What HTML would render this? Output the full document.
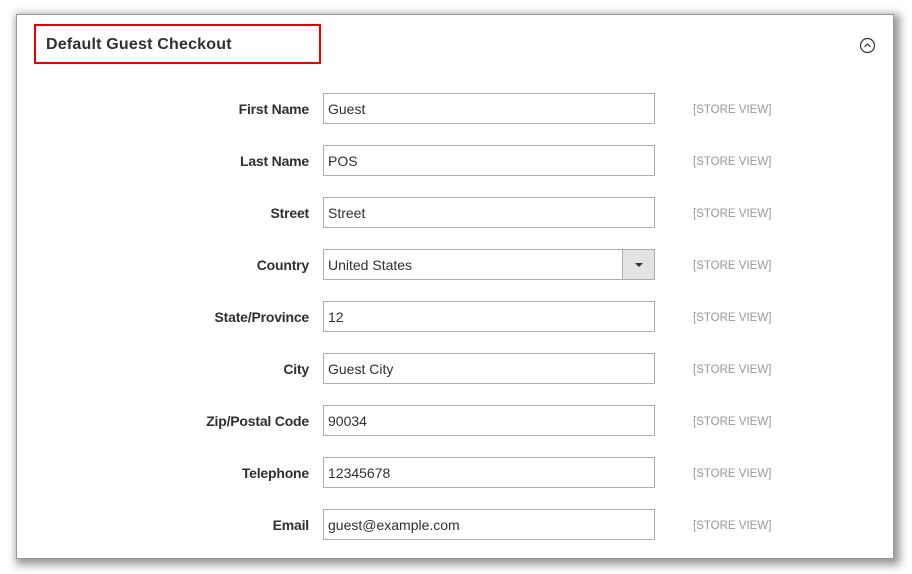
<!DOCTYPE html>
<html><head><style>
body{margin:0;width:912px;height:574px;background:#fff;position:relative;overflow:hidden;font-family:"Liberation Sans",sans-serif}
.panel{position:absolute;left:17px;top:15px;width:876px;height:543px;background:#fff;box-shadow:0 0 0 1px #999,3px 3px 8px 4px #999}
.red{position:absolute;left:34px;top:24px;width:283px;height:36px;border:2px solid #e00;}
.title{position:absolute;left:46px;top:36px;font-size:16px;font-weight:bold;color:#303030;letter-spacing:0.2px}
.row{position:absolute;left:0;width:912px;height:31px}
.lab{position:absolute;right:603px;top:8px;font-size:14px;font-weight:bold;color:#303030;white-space:nowrap;letter-spacing:-0.2px}
.inp{position:absolute;left:323px;top:0;width:330px;height:29px;border:1px solid #adadad;font-size:14px;color:#303030;line-height:31px;text-indent:4px}
.sv{position:absolute;left:693px;top:11px;font-size:11.5px;color:#999}
.sel{position:absolute;right:0;top:0;width:31px;height:29px;background:#e3e3e3;border-left:1px solid #adadad}
.sel:after{content:"";position:absolute;left:12px;top:13px;border:4px solid transparent;border-top:4px solid #333;border-bottom:0}
</style></head><body>
<div class="panel"></div>
<div class="red"></div>
<div class="title">Default Guest Checkout</div>
<svg style="position:absolute;left:859px;top:37px" width="17" height="17"><circle cx="8.5" cy="8.5" r="7" fill="none" stroke="#333" stroke-width="1.2"/><path d="M5.5 10 L8.5 7 L11.5 10" fill="none" stroke="#333" stroke-width="1.2"/></svg>
<div class="row" style="top:93px"><div class="lab">First Name</div><div class="inp">Guest</div><div class="sv">[STORE VIEW]</div></div>
<div class="row" style="top:145px"><div class="lab">Last Name</div><div class="inp">POS</div><div class="sv">[STORE VIEW]</div></div>
<div class="row" style="top:197px"><div class="lab">Street</div><div class="inp">Street</div><div class="sv">[STORE VIEW]</div></div>
<div class="row" style="top:249px"><div class="lab">Country</div><div class="inp">United States<div class="sel"></div></div><div class="sv">[STORE VIEW]</div></div>
<div class="row" style="top:301px"><div class="lab">State/Province</div><div class="inp">12</div><div class="sv">[STORE VIEW]</div></div>
<div class="row" style="top:353px"><div class="lab">City</div><div class="inp">Guest City</div><div class="sv">[STORE VIEW]</div></div>
<div class="row" style="top:405px"><div class="lab">Zip/Postal Code</div><div class="inp">90034</div><div class="sv">[STORE VIEW]</div></div>
<div class="row" style="top:457px"><div class="lab">Telephone</div><div class="inp">12345678</div><div class="sv">[STORE VIEW]</div></div>
<div class="row" style="top:509px"><div class="lab">Email</div><div class="inp">guest@example.com</div><div class="sv">[STORE VIEW]</div></div>
</body></html>
